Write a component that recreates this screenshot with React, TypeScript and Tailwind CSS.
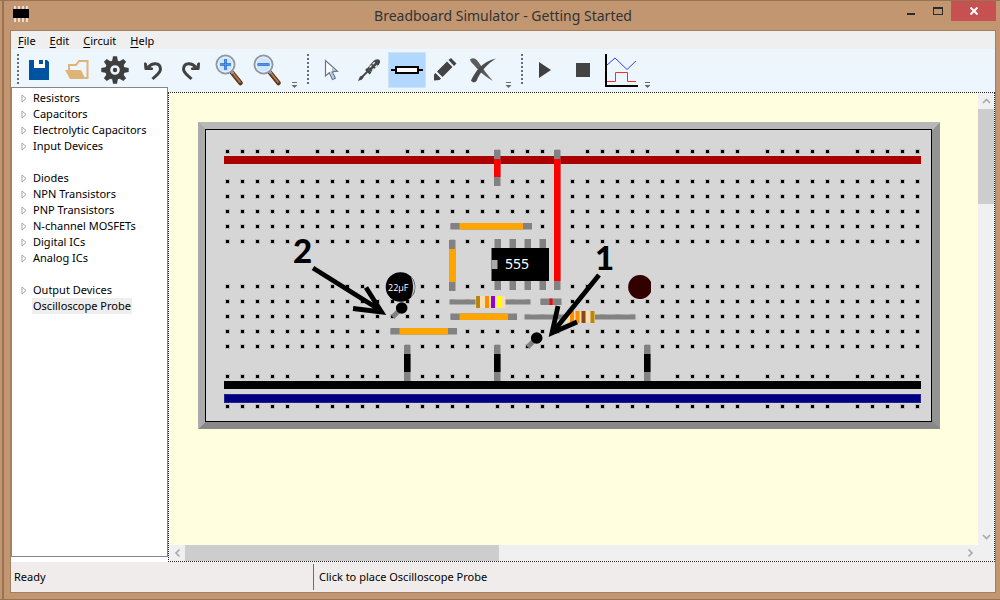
import type { ReactNode } from "react";
import clsx from "clsx";

const PITCH = 15;
const COLUMNS = Array.from({ length: 47 }, (_, i) => i);
const RAIL_ROWS = [150, 375, 405];
const TERMINAL_ROWS = [180, 195, 210, 225, 240, 285, 300, 315, 330, 345];

const TREE: { label: string; leaf?: boolean; gapBefore?: boolean }[] = [
  { label: "Resistors" },
  { label: "Capacitors" },
  { label: "Electrolytic Capacitors" },
  { label: "Input Devices" },
  { label: "Diodes", gapBefore: true },
  { label: "NPN Transistors" },
  { label: "PNP Transistors" },
  { label: "N-channel MOSFETs" },
  { label: "Digital ICs" },
  { label: "Analog ICs" },
  { label: "Output Devices", gapBefore: true },
  { label: "Oscilloscope Probe", leaf: true },
];

function ToolButton({ label, active, children }: { label: string; active?: boolean; children: ReactNode }) {
  return (
    <button
      type="button"
      aria-label={label}
      aria-pressed={active}
      className={clsx(
        "flex h-9 w-[38px] items-center justify-center border",
        active ? "border-[#cfe2f5] bg-[#b2d8ff]" : "border-transparent",
      )}
    >
      {children}
    </button>
  );
}

function Grip() {
  return <div className="mt-[2px] h-[30px] w-0 border-l-2 border-dotted border-[#6b6b6b]" />;
}

function Overflow() {
  return (
    <button type="button" aria-label="More tools" className="flex h-[37px] w-2 items-end justify-center">
      <svg width="7" height="7" viewBox="0 0 7 7" aria-hidden="true">
        <path d="M1 0h5v1H1zM0.5 3h6L3.500 6z" fill="#6a6a6a" />
      </svg>
    </button>
  );
}

function SaveIcon() {
  return (
    <svg width="20" height="20" viewBox="0 0 20 20">
      <path d="M0 0H5V8H16V0H18L20 2V20H0Z" fill="#0053a0" />
      <path d="M5 0H16V8H5Z" fill="#0053a0" />
      <path d="M5 0H10V4H14V0H16V8H5Z" fill="#fff" />
      <path d="M10 0H14V4H10Z" fill="#0053a0" />
      <path d="M5 0H10V8H5Z" fill="#0053a0" />
      <path d="M5 0H10V7H15V8H5Z" fill="#fff" />
      <path d="M10 4H15V7H10Z" fill="#fff" />
    </svg>
  );
}

function FolderIcon() {
  return (
    <svg width="24" height="20" viewBox="0 0 24 20">
      <path d="M4 10V5H11L14 1H22.500V18H20" fill="none" stroke="#deb478" strokeWidth="2" />
      <path d="M0 10H16L20.500 19H5Z" fill="#deb478" />
    </svg>
  );
}

function GearIcon() {
  const teeth = [0, 45, 90, 135, 180, 225, 270, 315];
  return (
    <svg width="28" height="28" viewBox="0 0 28 28">
      {teeth.map((a) => (
        <path key={a} d="M11 5.500L12 0.300H16L17 5.500Z" fill="#3f3f3f" transform={`rotate(${a} 14 14)`} />
      ))}
      <circle cx="14" cy="14" r="7.300" fill="none" stroke="#3f3f3f" strokeWidth="5" />
      <circle cx="14" cy="14" r="2.200" fill="#3f3f3f" />
    </svg>
  );
}

function UndoIcon({ flip }: { flip?: boolean }) {
  return (
    <svg width="20" height="22" viewBox="0 0 20 22" className={clsx(flip && "-scale-x-100")}>
      <path d="M5 8.500C9 3.500 17 3 17.500 10C17.500 14 13.500 16 9.500 20" fill="none" stroke="#414141" strokeWidth="3" />
      <path d="M1.500 4L2 10.500H9.500V9L4.500 8.500L3 4Z" fill="#414141" stroke="#414141" />
    </svg>
  );
}

function MagnifierIcon({ plus }: { plus?: boolean }) {
  return (
    <svg width="28" height="32" viewBox="0 0 28 32">
      <path d="M17 18.500L25.500 29" stroke="#5b3a24" strokeWidth="4.500" strokeLinecap="round" />
      <path d="M17.500 18.500L25 28" stroke="#b9784a" strokeWidth="1.800" strokeLinecap="round" />
      <path d="M15.500 16L18 19.500" stroke="#999" strokeWidth="3" />
      <circle cx="10.500" cy="10.500" r="9" fill="#cfe5fd" stroke="#8f98a3" strokeWidth="2" />
      <circle cx="10.500" cy="10.500" r="7.500" fill="none" stroke="#edf6ff" strokeWidth="1" />
      <path d={plus ? "M5 10.500H16M10.500 5V16" : "M4.500 10.500H16.500"} stroke="#2267d2" strokeWidth="2.600" />
      <path d={plus ? "M5 10.500H16M10.500 5V16" : "M4.500 10.500H16.500"} stroke="#4e93ed" strokeWidth="1" />
    </svg>
  );
}

function PointerIcon() {
  return (
    <svg width="15" height="22" viewBox="0 0 15 22">
      <path d="M1.500 1.500V17L5.300 13.700L8.500 20.500L11.300 19.200L8.200 12.700L13.500 12.200Z" fill="#fbfdff" stroke="#62758f" strokeWidth="1.200" />
      <path d="M6 13L9 19.500L10.500 19L7.500 12.500L12 11.800L8 8V12Z" fill="#b5c2d2" />
    </svg>
  );
}

function ScrewdriverIcon() {
  return (
    <svg width="24" height="24" viewBox="0 0 24 24">
      <path d="M10 10.500L16 3.500C18 1.500 21 0.500 22.500 2C24 3.500 22.500 6.500 20.500 8L14 14Z" fill="#454545" />
      <path d="M9 11L13.500 15.500" stroke="#454545" strokeWidth="2.500" />
      <path d="M11 13L5 19" stroke="#454545" strokeWidth="1.800" />
      <path d="M1 23L3 18.500L5.500 17.500L6.500 19.500L5 21.500Z" fill="#454545" />
      <path d="M12.500 9.500L18 4M15 12.500L21 6.500" stroke="#e8edf2" strokeWidth="1.300" strokeDasharray="3 1.500" />
    </svg>
  );
}

function ResistorIcon() {
  return (
    <svg width="32" height="10" viewBox="0 0 32 10" className="shrink-0">
      <path d="M0 5H5M27 5H32" stroke="#000" strokeWidth="2" />
      <rect x="5" y="2" width="22" height="6" fill="#fff" stroke="#000" strokeWidth="2" />
    </svg>
  );
}

function PencilIcon() {
  return (
    <svg width="24" height="24" viewBox="0 0 24 24">
      <path d="M4 13.500L14 3.500L19.500 9L9.500 19ZM15.500 2L18 0L23.500 5.500L21 8ZM1 16.500L2.500 15L8 20.500L6.500 22L1 22.500Z" fill="#434343" />
    </svg>
  );
}

function CrossIcon() {
  return (
    <svg width="28" height="26" viewBox="0 0 28 26">
      <path d="M1 2.500C4 0.500 6 1 9 4.500C14 11 18 18 24 24C15 19 9 13 4.500 7.500C3 6 2 5 1 2.500Z" fill="#5c5c5c" />
      <path d="M2 23.500C6 15 13 4.500 27 1.500C18 7 11 15 7.500 24C6 26 3 25.500 2 23.500Z" fill="#4a4a4a" />
    </svg>
  );
}

function ScopeIcon() {
  return (
    <svg width="33" height="33" viewBox="0 0 33 33" className="shrink-0">
      <path d="M1 0V32H33" fill="none" stroke="#000" strokeWidth="2" />
      <path d="M2 11L10 4L22 15.500L31 7" fill="none" stroke="#3b3bff" />
      <path d="M2 27.500H10.500V18.500H22.500V27.500H31" fill="none" stroke="#ff2a2a" />
    </svg>
  );
}

function Chevron({ className }: { className?: string }) {
  return (
    <svg width="9" height="6" viewBox="0 0 9 6" className={className} aria-hidden="true">
      <path d="M1 5L4.500 1.500L8 5" fill="none" stroke="#a8a8a8" strokeWidth="1.600" />
    </svg>
  );
}

function Wire({ x, y, length, vertical, color, cap = 9 }: {
  x: number;
  y: number;
  length: number;
  vertical?: boolean;
  color: string;
  cap?: number;
}) {
  return (
    <g>
      <rect x={x} y={y} width={vertical ? 6.5 : length} height={vertical ? length : 6.5} fill="#828282" />
      <rect
        x={vertical ? x : x + cap}
        y={vertical ? y + cap : y}
        width={vertical ? 6.5 : length - 2 * cap}
        height={vertical ? length - 2 * cap : 6.5}
        fill={color}
      />
    </g>
  );
}

function Resistor({ lead, leadEnd, body, y, bands }: {
  lead: number;
  leadEnd: number;
  body: number;
  y: number;
  bands: [number, string][];
}) {
  return (
    <g>
      <rect x={lead} y={y - 2.5} width={leadEnd - lead} height="5" fill="#828282" />
      <rect x={body} y={y - 6} width="30" height="12" fill="#f5deb3" />
      {bands.map(([x, color]) => (
        <rect key={x} x={body + x} y={y - 6} width="4" height="12" fill={color} />
      ))}
    </g>
  );
}

function Probe({ x, y }: { x: number; y: number }) {
  return (
    <g>
      <path d={`M${x} ${y}l-9 9`} stroke="#828282" strokeWidth="5" />
      <circle cx={x} cy={y} r="5.800" />
    </g>
  );
}

function Hole({ column, y }: { column: number; y: number }) {
  return <rect x={225.5 + column * PITCH} y={y - 0.5} width="4" height="4" stroke="#b9b9b9" />;
}

function Breadboard() {
  return (
    <svg width="742" height="307" viewBox="198 122 742 307" role="img" aria-label="Breadboard" className="block shrink-0">
      <g shapeRendering="crispEdges">
        <path d="M198 122H940L932 130H206Z" fill="#b8b8b8" />
        <path d="M198 122L206 130V421L198 429Z" fill="#ababab" />
        <path d="M940 122L932 130V421L940 429Z" fill="#939393" />
        <path d="M198 429L206 421H932L940 429Z" fill="#888888" />
      </g>
      <rect x="205.500" y="129.500" width="726" height="292" fill="#d6d6d6" stroke="#000" />

      {RAIL_ROWS.map((y) =>
        COLUMNS.filter((c) => c % 6 !== 5).map((c) => <Hole key={`${y}-${c}`} column={c} y={y} />),
      )}
      {TERMINAL_ROWS.map((y) => COLUMNS.map((c) => <Hole key={`${y}-${c}`} column={c} y={y} />))}

      <rect x="224" y="156" width="697" height="8" fill="#aa0000" />
      <rect x="224" y="381" width="697" height="8" fill="#000" />
      <rect x="224.500" y="394.500" width="696" height="8" fill="#000080" stroke="#22228c" />

      <Wire x={494} y={150} length={36} vertical color="#ff0000" />
      <Wire x={554} y={150} length={140} vertical color="#ff0000" />
      <Wire x={450.5} y={223} length={81.5} color="#ffa500" />
      <Wire x={449} y={240} length={51} vertical color="#ffa500" />
      <Wire x={450.5} y={313.5} length={66.5} color="#ffa500" />
      <Wire x={390.5} y={328} length={66.5} color="#ffa500" />
      <Wire x={404} y={345} length={36} vertical color="#000" />
      <Wire x={494} y={345} length={36} vertical color="#000" />
      <Wire x={644} y={345} length={36} vertical color="#000" />
      <Wire x={540.5} y={298.5} length={21} color="#ff0000" />

      {[494.5, 509.5, 524.5, 539.5].map((x) => (
        <path key={x} d={`M${x} 239h6.500v9h-6.500zM${x} 281h6.500v9h-6.500z`} fill="#828282" />
      ))}
      <rect x="491.500" y="248" width="57.500" height="33" />
      <rect x="491.500" y="260" width="6" height="9" fill="#aaa" />
      <text x="505" y="269" fill="#fff" className="font-['Noto_Sans',sans-serif] text-[14px]">555</text>

      <Resistor lead={449.5} leadEnd={530.5} body={475.5} y={302} bands={[[0.5, "#b8860b"], [9.5, "#ff8c00"], [15.5, "#9400d3"], [21.5, "#ffff00"]]} />
      <Resistor lead={524.5} leadEnd={635.5} body={565} y={317} bands={[[5, "#ff8c00"], [10.5, "#ff8c00"], [16.5, "#8b4513"], [25.5, "#b8860b"]]} />

      <circle cx="400.500" cy="287" r="14.800" />
      <path d="M411 276.500Q415 282 415 287T411 297.500Q413 292 413 287T411 276.500Z" fill="#c4c4c4" />
      <text x="388" y="291" fill="#fff" className="font-['Open_Sans',sans-serif] text-[9px]">22µF</text>
      <path d="M651 282V292A12 12 0 1 1 651 282Z" fill="#330000" />
      <Probe x={401.7} y={308} />
      <Probe x={536.7} y={338} />

      <g fill="none" stroke="#000" strokeWidth="4.800">
        <path d="M313 268L380 310M366 287.500L381.500 312L353 308.500" />
        <path d="M599 275L553 332M558 306L552 333L577 322" />
      </g>
      <text x="293" y="263" className="font-[Lato,sans-serif] text-[33px] font-black">2</text>
      <text x="595" y="270" className="font-[Lato,sans-serif] text-[33px] font-black">1</text>
    </svg>
  );
}

function TitleBar() {
  return (
    <header className="relative flex h-[30px] items-center justify-center">
      <svg width="16" height="16" viewBox="0 0 16 16" className="absolute left-[3px] top-[5px]" aria-hidden="true">
        <path d="M1 0h2v16H1zM5 0h2v16H5zM9 0h2v16H9zM13 0h2v16h-2z" fill="#e6ddd4" />
        <rect y="3" width="16" height="9" />
      </svg>
      <h1 className="pb-0.5 text-[14px] text-[#333]">Breadboard Simulator - Getting Started</h1>
      <div className="absolute right-0 top-0 flex h-5">
        <button type="button" aria-label="Minimize" className="flex w-[29px] items-end justify-center pb-[6px]">
          <span className="h-[2px] w-2 bg-[#2b2b2b]" />
        </button>
        <button type="button" aria-label="Maximize" className="flex w-[26px] justify-center pt-[6px]">
          <span className="h-2 w-[10px] border border-t-2 border-[#2b2b2b]" />
        </button>
        <button type="button" aria-label="Close" className="flex w-[45px] items-center justify-center bg-[#c75050]">
          <svg width="8" height="8" viewBox="0 0 8 8">
            <path d="M0.500 0.500L7.500 7.500M7.500 0.500L0.500 7.500" stroke="#fff" strokeWidth="2" />
          </svg>
        </button>
      </div>
    </header>
  );
}

export default function App() {
  return (
    <div className="flex min-h-screen flex-col border-y border-[#987353] bg-[#c19670] pl-[2px] font-['Noto_Sans','Open_Sans',sans-serif] text-[11px] text-black">
      <div className="flex flex-1 flex-col border-l-2 border-[#987353] pb-[6px] pl-[6px] pr-1">
        <TitleBar />
        <div className="-mt-px flex flex-1 flex-col border border-[#a57f5d] bg-white">
          <nav aria-label="Main menu" className="flex h-[18px] items-center bg-[#efefef] pt-px">
            {["File", "Edit", "Circuit", "Help"].map((item) => (
              <button key={item} type="button" className="px-[7px] leading-4">
                <span className="underline underline-offset-2">{item[0]}</span>
                {item.slice(1)}
              </button>
            ))}
          </nav>

          <div role="toolbar" aria-label="Tools" className="flex h-[43px] items-start bg-[#edf5fd] pl-[6px] pt-[3px]">
            <Grip />
            <div className="ml-px flex">
              <ToolButton label="Save"><SaveIcon /></ToolButton>
              <ToolButton label="Open"><FolderIcon /></ToolButton>
              <ToolButton label="Settings"><GearIcon /></ToolButton>
              <ToolButton label="Undo"><UndoIcon /></ToolButton>
              <ToolButton label="Redo"><UndoIcon flip /></ToolButton>
              <ToolButton label="Zoom in"><MagnifierIcon plus /></ToolButton>
              <ToolButton label="Zoom out"><MagnifierIcon /></ToolButton>
            </div>
            <div className="ml-1 mr-[9px]"><Overflow /></div>
            <Grip />
            <div className="ml-[3px] flex">
              <ToolButton label="Select"><PointerIcon /></ToolButton>
              <ToolButton label="Wire"><ScrewdriverIcon /></ToolButton>
              <ToolButton label="Place component" active><ResistorIcon /></ToolButton>
              <ToolButton label="Edit"><PencilIcon /></ToolButton>
              <ToolButton label="Delete"><CrossIcon /></ToolButton>
            </div>
            <div className="ml-[2px] mr-[9px]"><Overflow /></div>
            <Grip />
            <div className="ml-[3px] flex">
              <ToolButton label="Run">
                <svg width="12" height="16" viewBox="0 0 12 16"><path d="M0 0L12 8L0 16Z" fill="#3f3f3f" /></svg>
              </ToolButton>
              <ToolButton label="Stop">
                <svg width="14" height="14" viewBox="0 0 14 14"><path d="M0 0H14V14H0Z" fill="#434343" /></svg>
              </ToolButton>
              <ToolButton label="Oscilloscope"><ScopeIcon /></ToolButton>
            </div>
            <div className="ml-[3px]"><Overflow /></div>
          </div>

          <div className="flex flex-1">
            <aside className="relative z-10 -mt-[5px] mb-[5px] w-[157px] shrink-0 border border-[#828790] bg-white pt-[2px]">
              <ul>
                {TREE.map((item) => (
                  <li key={item.label} className={clsx("flex h-4 items-center pl-[9px]", item.gapBefore && "mt-4")}>
                    <svg width="6" height="9" viewBox="0 0 6 9" className={clsx(item.leaf && "invisible")} aria-hidden="true">
                      <path d="M1 1L5 4.500L1 8Z" fill="#fff" stroke="#a6a6a6" />
                    </svg>
                    <button type="button" className={clsx("ml-[5px] whitespace-nowrap px-px leading-4", item.leaf && "bg-[#eeeeee]")}>
                      {item.label}
                    </button>
                  </li>
                ))}
              </ul>
            </aside>

            <main className="flex min-w-0 flex-1 flex-col border border-dotted border-[#222]">
              <div className="flex flex-1">
                <div className="min-w-0 flex-1 overflow-hidden bg-[#ffffe0] p-[29px]">
                  <Breadboard />
                </div>
                <div className="flex w-4 flex-col items-center bg-[#f0f0f0]">
                  <button type="button" aria-label="Scroll up" className="flex h-4 items-center"><Chevron /></button>
                  <div className="h-[95px] w-full bg-[#cdcdcd]" />
                  <button type="button" aria-label="Scroll down" className="mt-auto flex h-4 items-center"><Chevron className="rotate-180" /></button>
                </div>
              </div>
              <div className="flex h-4 items-center bg-[#f0f0f0] pr-4">
                <button type="button" aria-label="Scroll left" className="flex w-4 justify-center"><Chevron className="-rotate-90" /></button>
                <div className="h-full w-[314px] bg-[#cdcdcd]" />
                <button type="button" aria-label="Scroll right" className="ml-auto flex w-4 justify-center"><Chevron className="rotate-90" /></button>
              </div>
            </main>
          </div>

          <footer className="flex h-[30px] items-center bg-[#f0eceb]">
            <p className="w-[302px] pl-[3px]">Ready</p>
            <p className="flex h-[26px] items-center border-l border-[#6f6b6b] pl-[5px]">Click to place Oscilloscope Probe</p>
          </footer>
        </div>
      </div>
    </div>
  );
}
